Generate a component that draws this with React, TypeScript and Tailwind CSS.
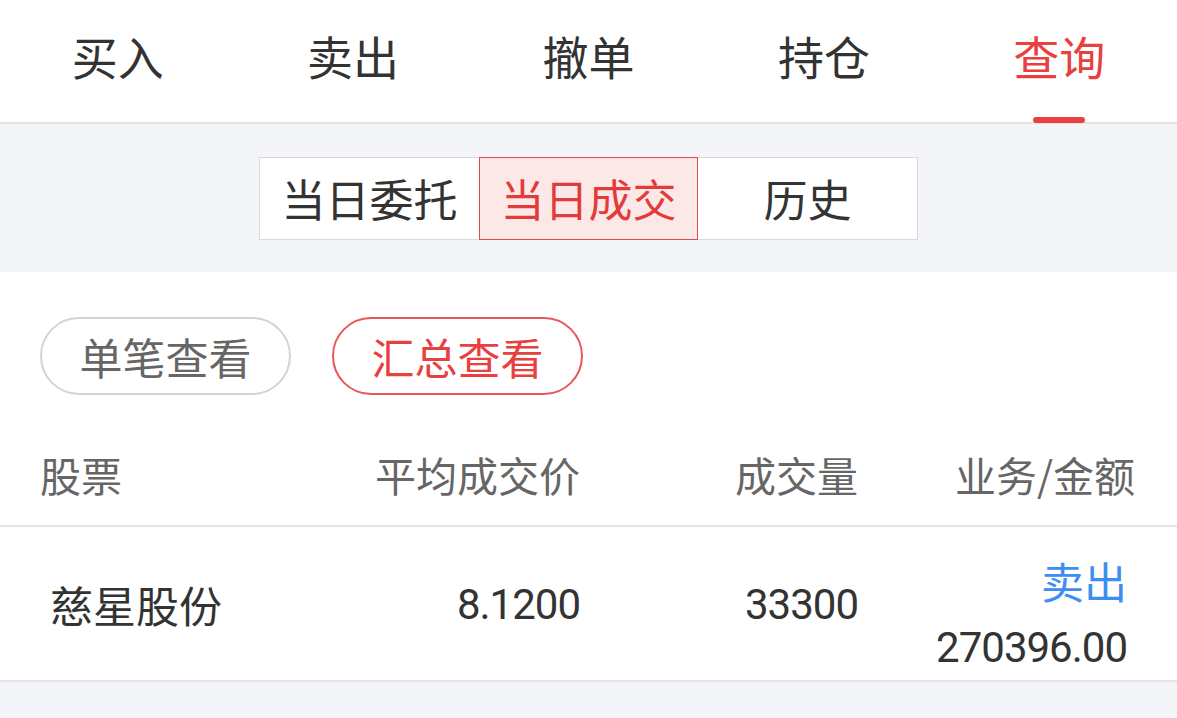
const tabs = ["买入", "卖出", "撤单", "持仓", "查询"];
const segments = ["当日委托", "当日成交", "历史"];

const font = {
  fontFamily: '"Noto Sans CJK SC", "Noto Sans", sans-serif',
};

const numFont = "font-['Roboto','Noto_Sans_CJK_SC',sans-serif] text-[42px] tracking-[-1px]";

export default function App() {
  return (
    <div
      className="flex h-[718px] w-[1177px] flex-col overflow-hidden bg-[#f4f5f8]"
      style={font}
    >
      <div className="grid h-[124px] grid-cols-5 border-b-2 border-[#e3e4e8] bg-white">
        {tabs.map((tab, index) => (
          <div
            key={tab}
            className="relative flex items-start justify-center pt-[20px]"
          >
            <span
              className={`text-[46px] leading-[70px] ${
                index === 4 ? "text-[#e8403f]" : "text-[#333333]"
              }`}
            >
              {tab}
            </span>
            {index === 4 ? (
              <span className="absolute bottom-[-1px] h-[6px] w-[52px] rounded-full bg-[#e8403f]" />
            ) : null}
          </div>
        ))}
      </div>

      <div className="flex h-[148px] items-center justify-center">
        <div className="flex h-[83px] border border-[#d9dadf] bg-white">
          {segments.map((segment, index) => (
            <div
              key={segment}
              className={`flex w-[219px] items-center justify-center text-[44px] ${
                index === 1
                  ? "-my-px border border-[#e04a4a] bg-[#fde8e8] text-[#e23b3b]"
                  : "text-[#333333]"
              }`}
            >
              {segment}
            </div>
          ))}
        </div>
      </div>

      <div className="bg-white">
        <div className="flex gap-[41px] px-[40px] pt-[45px]">
          <div className="flex h-[78px] w-[251px] items-center justify-center rounded-full border-2 border-[#d4d4d4] text-[43px] text-[#666666]">
            单笔查看
          </div>
          <div className="flex h-[78px] w-[251px] items-center justify-center rounded-full border-2 border-[#e8585a] text-[43px] text-[#e8403f]">
            汇总查看
          </div>
        </div>

        <div className="grid h-[132px] grid-cols-[1fr_300px_278px_277px] items-center border-b-2 border-[#e3e4e8] pl-[40px] pr-[42px] pt-[30px] text-[41px] text-[#666666]">
          <span>股票</span>
          <span className="text-right">平均成交价</span>
          <span className="text-right">成交量</span>
          <span className="text-right">业务/金额</span>
        </div>

        <div className="grid h-[155px] grid-cols-[1fr_300px_278px_277px] items-center border-b-2 border-[#e3e4e8] pl-[50px] pr-[42px] text-[#333333]">
          <span className="text-[43px]">慈星股份</span>
          <span className={`text-right ${numFont}`}>8.1200</span>
          <span className={`text-right ${numFont}`}>33300</span>
          <div className="flex flex-col items-end pr-[8px] pt-[20px] leading-[67px]">
            <span className="text-[43px] text-[#3d8ef0]">卖出</span>
            <span className={numFont}>270396.00</span>
          </div>
        </div>
      </div>
    </div>
  );
}
